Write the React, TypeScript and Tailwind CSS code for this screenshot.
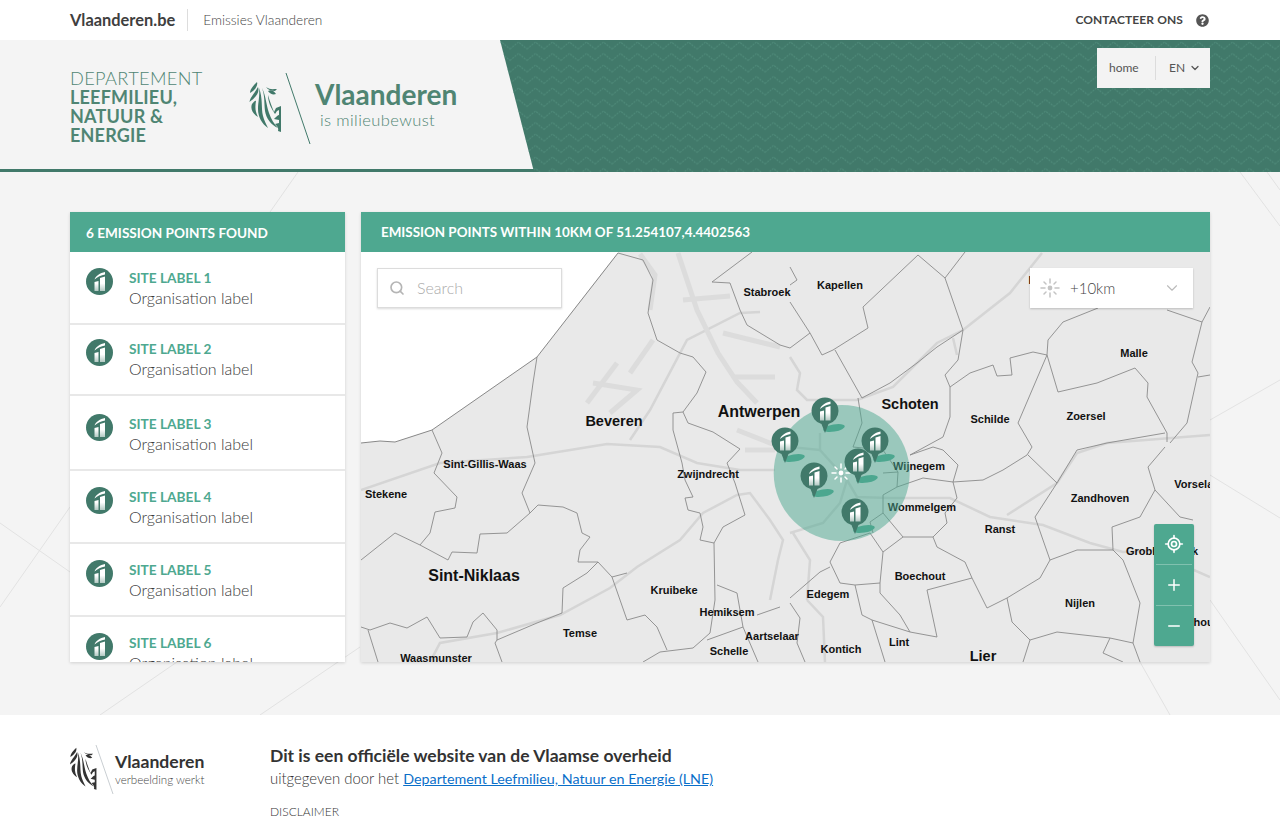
import { useId } from 'react'
import { ChevronDown, LocateFixed, Minus, Plus, Search } from 'lucide-react'
import { FaQuestionCircle } from 'react-icons/fa'

const sites = [
  { id: 1, name: 'SITE LABEL 1', row: 'h-[73px] pt-4' },
  { id: 2, name: 'SITE LABEL 2', row: 'h-[71px] pt-3.5' },
  { id: 3, name: 'SITE LABEL 3', row: 'h-[75px] pt-[18px]' },
  { id: 4, name: 'SITE LABEL 4', row: 'h-[73px] pt-4' },
  { id: 5, name: 'SITE LABEL 5', row: 'h-[73px] pt-4' },
  { id: 6, name: 'SITE LABEL 6', row: 'h-[73px] pt-4' },
]

// page coordinates, the svg viewBox below starts at the map's corner
const borders = [
  'M618 253 L643 260 L653 280 L648 313 L657 340 L680 353 L693 357 L706 372 L697 393 L683 412 L688 423 L713 432 L740 449 L727 463 L735 483 L745 515 L723 527 L714 543 L715 600 L710 633 L693 648 L660 652 L643 662',
  'M537 357 L533 383 L527 427 L535 463 L522 493 L530 513',
  'M432 430 L442 453 L434 473 L457 497 L455 508 L435 512 L430 533 L420 545',
  'M361 560 L395 533 L420 545 L448 560 L452 552 L477 553 L480 534 L507 533 L530 513 L538 505 L563 507 L577 513 L582 533 L590 537 L580 550 L578 562 L598 562 L612 577 L627 573',
  'M683 412 L673 413 L673 430 L682 463 L685 480 L693 497 L685 498 L688 510 L700 513 L703 527 L700 540 L714 543',
  'M598 562 L587 573 L563 588 L562 613 L537 623 L497 640 L495 643 L502 662',
  'M612 577 L627 620 L645 615 L657 627 L667 650',
  'M361 627 L370 630 L390 623 L407 628 L427 617 L440 638 L467 637 L473 622 L483 613 L497 630 L497 640',
  'M368 630 L378 662',
  'M717 585 L737 593 L743 627 L758 662 M743 627 L707 640 M757 615 L780 607',
  'M752 252 L712 282 L730 283 L740 310 L747 325 L780 345 L790 348',
  'M790 267 L797 280 L790 285',
  'M918 255 L863 307 L868 328 L833 350 L822 355 L810 333 L790 302',
  'M810 333 L790 348',
  'M918 255 L945 278 L963 330 L937 347 L917 363 L890 383 L862 398 L835 350',
  'M945 278 L965 252',
  'M963 330 L958 360 L945 375 L950 387 L950 417 L943 437 L910 455',
  'M950 387 L970 373 L993 365 L997 376 L1012 375 L1010 358 L1033 352 L1047 355',
  'M1047 355 L1018 423 L1032 447 L1027 455 L1003 470 L983 480 L953 482',
  'M1047 355 L1048 340 L1063 322 L1098 308',
  'M1047 355 L1058 392 L1097 383 L1135 368 L1148 383 L1147 397 L1167 433 L1167 442',
  'M1167 310 L1202 322 L1192 362 L1198 373 L1187 423 L1170 443',
  'M1202 322 L1210 307 M1198 377 L1210 375',
  'M1165 433 L1107 443 L1077 450 L1057 483 L1035 517 L1043 540 L1050 560',
  'M1028 455 L1057 483',
  'M1165 447 L1148 467 L1155 490 L1140 517 L1112 527 L1113 550 L1123 560 L1140 603 L1133 643 L1140 662',
  'M1155 490 L1180 517 L1193 520',
  'M1050 560 L1077 550 L1113 550',
  'M1050 560 L1040 578 L1007 598 L987 608 L972 578 L965 562 L937 547 L933 537 L903 537 L883 552 L870 533',
  'M953 482 L957 498 L945 513 L947 523 L933 537',
  'M883 552 L880 583 L880 593 L900 615 L910 632 L937 637 L927 590 L972 578',
  'M830 562 L840 543 L870 533',
  'M830 562 L840 583 L855 585 L880 583',
  'M830 567 L820 572 L790 598',
  'M855 585 L862 615 L872 620 L885 662',
  'M872 620 L910 632',
  'M790 603 L800 618 L797 643 L805 662',
  'M1007 598 L1012 622 L1030 640 L1023 662',
  'M1030 640 L1057 632 L1110 638 L1133 643',
  'M1110 638 L1103 653 L1123 662',
  'M858 398 L862 423 L853 447 L883 450 L898 472 L883 473',
  'M898 472 L897 487 L883 495 L883 513 L870 522 L873 533',
  'M883 513 L903 537',
  'M897 487 L923 478 L953 482',
  'M910 455 L933 447 L943 450 L958 465 L953 482',
]

const roads = [
  'M361 490 L440 463 L527 457 L607 444 L660 447 L697 463 L740 470 L775 470',
  'M430 662 L440 643 L497 633 L560 615 L610 588 L637 567 L680 540 L703 513 L737 495 L750 493 L770 520 L783 540 L778 560',
  'M770 600 L778 560',
  'M630 440 L650 410 L687 340 L740 313 L760 312',
  'M847 480 L857 497 L890 498 L950 498 L990 517 L1043 525 L1090 543 L1123 552 L1157 550 M1187 567 L1210 577',
  'M1007 515 L1057 483 L1077 453 L1107 443 L1210 435',
  'M963 330 L1010 293 L1042 253',
  'M790 357 L800 373 L797 390 L807 400 L857 400 L893 387 L917 363 L937 343 L963 330 M953 338 L957 355',
  'M820 433 L820 450 L847 480 L840 503 L823 523 L790 533',
  'M790 447 L820 450',
  'M807 600 L810 560 L793 533',
  'M807 600 L823 617 L825 662',
]

const docks = [
  'M678 253 L697 310 L718 353 L737 382 L757 403',
  'M683 300 L730 296',
  'M723 333 L780 347',
  'M733 377 L775 377',
  'M617 363 L587 403',
  'M593 383 L637 390 L610 413',
  'M630 373 L653 340',
  'M737 430 L780 447',
  'M745 450 L775 450',
  'M640 254 L655 275 L650 310',
]

const labels = [
  { t: 'Stabroek', x: 767, y: 296, size: 11 },
  { t: 'Kapellen', x: 840, y: 289, size: 11 },
  { t: 'Malle', x: 1134, y: 357, size: 11 },
  { t: 'Schoten', x: 910, y: 409, size: 14.5 },
  { t: 'Antwerpen', x: 759, y: 417, size: 16 },
  { t: 'Beveren', x: 614, y: 426, size: 14.5 },
  { t: 'Schilde', x: 990, y: 423, size: 11 },
  { t: 'Zoersel', x: 1086, y: 420, size: 11 },
  { t: 'Sint-Gillis-Waas', x: 485, y: 468, size: 11 },
  { t: 'Zwijndrecht', x: 708, y: 478, size: 11 },
  { t: 'Wijnegem', x: 919, y: 470, size: 11 },
  { t: 'Vorselaar', x: 1199, y: 488, size: 11 },
  { t: 'Stekene', x: 386, y: 498, size: 11 },
  { t: 'Wommelgem', x: 922, y: 511, size: 11 },
  { t: 'Zandhoven', x: 1100, y: 502, size: 11 },
  { t: 'Ranst', x: 1000, y: 533, size: 11 },
  { t: 'Grobbendonk', x: 1162, y: 555, size: 11 },
  { t: 'Sint-Niklaas', x: 474, y: 581, size: 16 },
  { t: 'Kruibeke', x: 674, y: 594, size: 11 },
  { t: 'Boechout', x: 920, y: 580, size: 11 },
  { t: 'Nijlen', x: 1080, y: 607, size: 11 },
  { t: 'Edegem', x: 828, y: 598, size: 11 },
  { t: 'Herenthout', x: 1188, y: 626, size: 11 },
  { t: 'Hemiksem', x: 727, y: 616, size: 11 },
  { t: 'Temse', x: 580, y: 637, size: 11 },
  { t: 'Aartselaar', x: 772, y: 640, size: 11 },
  { t: 'Schelle', x: 729, y: 655, size: 11 },
  { t: 'Kontich', x: 841, y: 653, size: 11 },
  { t: 'Lint', x: 899, y: 646, size: 11 },
  { t: 'Waasmunster', x: 436, y: 662, size: 11 },
  { t: 'Lier', x: 983, y: 661, size: 14.5 },
  { t: 'Brecht', x: 1046, y: 284, size: 11 },
]

const pins = [
  { x: 825, y: 411 },
  { x: 785, y: 441 },
  { x: 875, y: 441 },
  { x: 814, y: 476 },
  { x: 858, y: 462 },
  { x: 855, y: 512 },
]

const Factory = ({ x = 0, y = 0 }: { x?: number; y?: number }) => {
  const id = useId()
  return (
    <g transform={`translate(${x} ${y})`}>
      <defs>
        <linearGradient id={id} x1="0" y1="0" x2="0" y2="1">
          <stop offset="0.6" stopColor="#fff" />
          <stop offset="1" stopColor="#fff" stopOpacity="0.6" />
        </linearGradient>
      </defs>
      <path
        d="M14 10 L19 8.5 L19 23 L14 23 Z M8.5 14 L12.5 13 L12.5 23 L8.5 23 Z M8.5 11.5 C10 7.5 14 5 19 4 L19 6.5 C15 7 11.5 9 8.5 11.5 Z"
        fill={`url(#${id})`}
      />
    </g>
  )
}

const Lion = ({ fill }: { fill: string }) => (
  <g fill={fill} stroke="none">
    <path d="M17 14 C18 18 15 22 10 25 C10 21 14 17 17 14 Z" />
    <path d="M18 19 C20 25 15 30 9.5 34 C10 29 15 25 18 19 Z" />
    <path d="M12 36 C14 33 16 32 16 33 C15 39 15 43 18 49 C13 46 10 41 12 36 Z" />
    <path d="M19 20 C23 30 21 40 23 48 C24 52 26 56 28 60 C22 56 18 49 18 41 C18 34 20 28 19 20 Z" />
    <path d="M22 20 C26 28 26 36 29 45 C31 51 34 56 38 60 C31 57 26 50 25 43 C24 34 25 28 22 20 Z" />
    <path d="M26 19 C30 22 33 21 37 21 L35 23 C32 23 28 22 26 19 Z" />
    <path d="M28 23 C31 21 34 23 36 26 C33 27 30 26 28 23 Z" />
    <path d="M28 27 C30 34 32 39 34 44 L36 40 L41 38 L41 64 L38 63 C39 60 37 58 35 56 L39 55 L39 52 L34 51 C36 49 38 47 39 47 L39 42 L37 43 L35 46 C31 40 28 34 28 27 Z" />
  </g>
)

const RadiusIcon = ({ color, size }: { color: string; size: number }) => (
  <svg width={size} height={size} viewBox="0 0 20 20" stroke={color} strokeWidth="1.5" strokeLinecap="round">
    <circle cx="10" cy="10" r="2.4" fill={color} stroke="none" />
    <path d="M10 1 V5 M10 15 V19 M1 10 H5 M15 10 H19 M4 4 L6 6 M14 14 L16 16 M16 4 L14 6 M6 14 L4 16" />
  </svg>
)

const Zigzag = () => (
  <svg className="absolute inset-0 w-full h-full" aria-hidden="true">
    <defs>
      <pattern id="zig" width="17" height="11.5" patternUnits="userSpaceOnUse">
        <path d="M0 9 L8.5 2 L17 9" fill="none" stroke="#4f8b7a" strokeWidth="1" strokeDasharray="2 1" />
      </pattern>
    </defs>
    <rect width="100%" height="100%" fill="#41796a" />
    <rect width="100%" height="100%" fill="url(#zig)" />
  </svg>
)

const BackgroundLines = () => (
  <svg className="absolute inset-0 w-full h-full" aria-hidden="true" stroke="#e2e2e2" fill="none">
    <path d="M0 523 L70 572 M70 507 L0 607 M177 662 L100 715 M360 647 L260 715 M298 172 L270 212" />
    <path d="M1210 420 L1280 380 M1210 475 L1280 518 M1210 600 L1280 700 M1140 662 L1170 715 M1240 172 L1280 226 M1267 172 L1280 190" />
  </svg>
)

const MapDrawing = () => (
  <svg viewBox="361 252 849 410" className="absolute inset-0 w-full h-full">
    <rect x="361" y="252" width="849" height="410" fill="#e9e9e9" />
    <path d="M361 252 L618 252 L537 357 L432 430 L395 442 L380 441 L361 443 Z" fill="#ffffff" />
    <path d="M361 443 L380 441 L395 442 L432 430 L537 357 L618 253" fill="none" stroke="#888" strokeWidth="1" />
    <g fill="none" stroke="#d5d5d5" strokeWidth="2.5">
      {roads.map((d) => (
        <path key={d} d={d} />
      ))}
    </g>
    <g fill="none" stroke="#dcdcdc" strokeWidth="5">
      {docks.map((d) => (
        <path key={d} d={d} />
      ))}
    </g>
    <g fill="none" stroke="#8a8a8a" strokeWidth="0.9" strokeLinejoin="round">
      {borders.map((d) => (
        <path key={d} d={d} />
      ))}
    </g>
    <g fill="#111" fontFamily="'Liberation Sans', Arial, sans-serif" fontWeight="700" textAnchor="middle">
      {labels.map((l) => (
        <text key={l.t} x={l.x} y={l.y} fontSize={l.size}>
          {l.t}
        </text>
      ))}
    </g>
    <circle cx="841.7" cy="473" r="68" fill="#4ca78f" fillOpacity="0.5" />
    <g transform="translate(831 463)">
      <RadiusIcon color="#fff" size={20} />
    </g>
    {pins.map((p) => (
      <g key={`${p.x}-${p.y}`}>
        <ellipse cx={p.x + 9} cy={p.y + 17} rx="11" ry="3.6" fill="#4ca78f" transform={`rotate(-10 ${p.x + 9} ${p.y + 17})`} />
        <path
          d={`M${p.x - 13.5} ${p.y} a13.5 13.5 0 1 1 27 0 a13.5 13.5 0 0 1 -10 13 l-3.5 9 l-3.5 -9 a13.5 13.5 0 0 1 -10 -13 Z`}
          fill="#41796a"
        />
        <Factory x={p.x - 13.5} y={p.y - 13.5} />
      </g>
    ))}
  </svg>
)

export default function App() {
  return (
    <div className="relative min-h-[835px] overflow-hidden bg-[#f4f4f4] font-['Lato',sans-serif] text-[#444]">
      <BackgroundLines />

      <div className="relative h-10 bg-white px-[70px] flex items-center justify-between">
        <div className="flex items-center">
          <span className="text-[16.4px] font-bold text-[#3f3f3f] pr-3">Vlaanderen.be</span>
          <span className="h-[22px] border-l border-[#dddddd]" />
          <span className="pl-[15px] text-[13.7px] font-light text-[#444]">Emissies Vlaanderen</span>
        </div>
        <div className="flex items-center gap-[13px] pr-px">
          <span className="text-xs font-bold tracking-[0.1px] text-[#444]">CONTACTEER ONS</span>
          <FaQuestionCircle className="w-[13px] h-[13px] text-[#555]" />
        </div>
      </div>

      <header className="relative h-[132px] bg-[#f4f4f4] border-b-[3px] border-[#41796a]">
        <div className="absolute inset-0 -bottom-[3px] [clip-path:polygon(500px_0,100%_0,100%_100%,534px_100%)]">
          <Zigzag />
        </div>
        <div className="relative flex h-full pl-[70px] pt-[29px] text-[#4f8573]">
          <div className="w-[179px] leading-[19px] text-[18.2px]">
            <div className="font-light tracking-[0.35px]">DEPARTEMENT</div>
            <div className="font-bold text-[18px] tracking-[0.2px]">LEEFMILIEU,</div>
            <div className="font-bold text-[18px] tracking-[0.2px]">NATUUR &amp;</div>
            <div className="font-bold text-[18px] tracking-[0.2px]">ENERGIE</div>
          </div>
          <svg width="66" height="76" viewBox="0 0 66 76" className="-mt-px shrink-0">
            <g transform="translate(-9 0)">
              <Lion fill="#41796a" />
            </g>
            <path d="M37 5 L61 76" stroke="#41796a" strokeWidth="1" />
          </svg>
          <div className="pt-[9px]">
            <div className="text-[28px] font-bold leading-[33px] text-[#4f8573]">Vlaanderen</div>
            <div className="pl-[5px] text-[16.5px] font-light leading-[19px] tracking-[0.4px] text-[#4f8573]">is milieubewust</div>
          </div>
        </div>
        <div className="absolute right-[70px] top-2 w-[113px] h-10 bg-[#f3f3f3] flex items-center text-xs text-[#555]">
          <span className="w-[58px] pl-3">home</span>
          <span className="h-6 border-l border-[#dcdcdc]" />
          <span className="pl-[13px]">EN</span>
          <ChevronDown className="w-3 h-3 ml-1" strokeWidth={2.5} />
        </div>
      </header>

      <main className="relative flex gap-4 px-[70px] pt-10 pb-[53px]">
        <section className="w-[275px] h-[450px] bg-white shadow-[0_1px_3px_rgba(0,0,0,0.15)] flex flex-col">
          <h2 className="h-10 shrink-0 bg-[#4ea890] pl-4 pt-0.5 flex items-center text-[13.6px] font-bold text-white">
            6 EMISSION POINTS FOUND
          </h2>
          <ul className="flex-1 overflow-hidden">
            {sites.map((s) => (
              <li key={s.id} className={`${s.row} border-b-2 border-[#e8e8e8] pl-4 flex gap-[16px]`}>
                <svg width="27" height="27" viewBox="0 0 27 27" className="shrink-0">
                  <circle cx="13.5" cy="13.5" r="13.5" fill="#41796a" />
                  <Factory />
                </svg>
                <div>
                  <div className="text-[13.7px] leading-5 font-bold text-[#4ea890]">{s.name}</div>
                  <div className="text-base leading-5 font-light text-[#3a3a3a]">Organisation label</div>
                </div>
              </li>
            ))}
          </ul>
        </section>

        <section className="w-[849px] h-[450px] flex flex-col shadow-[0_1px_3px_rgba(0,0,0,0.15)]">
          <h2 className="h-10 shrink-0 bg-[#4ea890] pl-5 pt-px flex items-center text-[13.4px] font-bold text-white">
            EMISSION POINTS WITHIN 10KM OF 51.254107,4.4402563
          </h2>
          <div className="relative flex-1 overflow-hidden">
            <MapDrawing />
            <div className="absolute left-4 top-4 w-[185px] h-10 bg-white border border-[#dcdcdc] shadow-[0_1px_2px_rgba(0,0,0,0.15)] flex items-center pl-[11px] gap-3">
              <Search className="w-4 h-4 text-[#b5b5b5]" strokeWidth={2.5} />
              <span className="text-[16px] font-light text-[#aaaaaa]">Search</span>
            </div>
            <div className="absolute right-[17px] top-4 w-[163px] h-10 bg-white shadow-[0_1px_2px_rgba(0,0,0,0.2)] flex items-center pl-2.5 pr-3 text-[#444]">
              <RadiusIcon color="#c4c4c4" size={20} />
              <span className="ml-2.5 flex-1 text-[15px] font-light">+10km</span>
              <ChevronDown className="w-[18px] h-[18px] text-[#bbbbbb]" strokeWidth={1.5} />
            </div>
            <div className="absolute right-4 top-[272px] w-10 rounded-[2px] bg-[#4ea890] text-white flex flex-col shadow-[0_1px_2px_rgba(0,0,0,0.2)]">
              <div className="h-10 flex items-center justify-center">
                <LocateFixed className="w-5 h-5" />
              </div>
              <div className="h-[41px] mx-0.5 border-t border-[#80c1af] flex items-center justify-center">
                <Plus className="w-[18px] h-[18px]" />
              </div>
              <div className="h-[41px] mx-0.5 border-t border-[#80c1af] flex items-center justify-center">
                <Minus className="w-[18px] h-[18px]" />
              </div>
            </div>
          </div>
        </section>
      </main>

      <footer className="relative h-[120px] bg-white pl-[70px] pt-[29px] flex">
        <svg width="45" height="52" viewBox="0 0 45 52" className="shrink-0">
          <g transform="translate(-8 -8) scale(0.84)">
            <Lion fill="#333" />
          </g>
          <path d="M26 1 L43 50" strokeWidth="1" stroke="#c9ced2" />
        </svg>
        <div className="w-[155px] pt-1.5">
          <div className="text-[17.6px] leading-6 font-bold text-[#333]">Vlaanderen</div>
          <div className="text-[11.6px] leading-[12px] font-light text-[#444]">verbeelding werkt</div>
        </div>
        <div>
          <div className="text-[17.5px] leading-6 font-bold text-[#333]">Dit is een officiële website van de Vlaamse overheid</div>
          <div className="text-[14.9px] leading-5 font-light text-[#333]">
            uitgegeven door het{' '}
            <a href="#lne" className="text-[14.3px] font-normal text-[#0a6fc9] underline">
              Departement Leefmilieu, Natuur en Energie (LNE)
            </a>
          </div>
          <div className="mt-[15px] text-xs font-light text-[#333]">DISCLAIMER</div>
        </div>
      </footer>
    </div>
  )
}
